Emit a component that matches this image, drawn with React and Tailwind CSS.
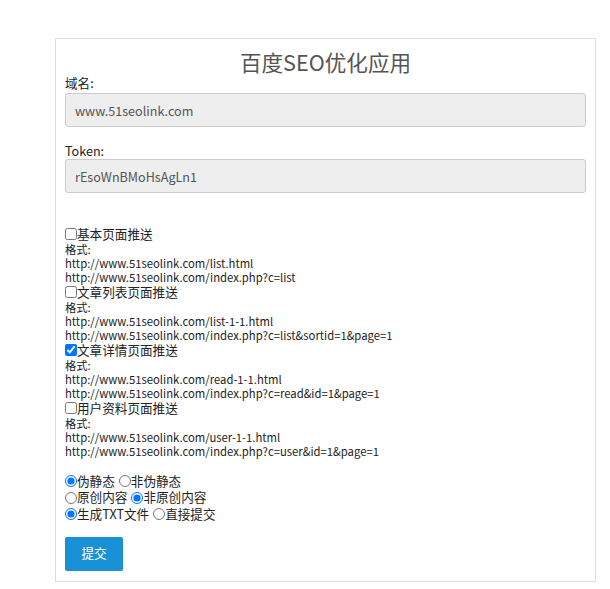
import React from 'react';

const font = { fontFamily: '"Noto Sans CJK SC", "Noto Sans", sans-serif' };

const sections = [
  { label: '基本页面推送', checked: false, urls: ['http://www.51seolink.com/list.html', 'http://www.51seolink.com/index.php?c=list'] },
  { label: '文章列表页面推送', checked: false, urls: ['http://www.51seolink.com/list-1-1.html', 'http://www.51seolink.com/index.php?c=list&sortid=1&page=1'] },
  { label: '文章详情页面推送', checked: true, urls: ['http://www.51seolink.com/read-1-1.html', 'http://www.51seolink.com/index.php?c=read&id=1&page=1'] },
  { label: '用户资料页面推送', checked: false, urls: ['http://www.51seolink.com/user-1-1.html', 'http://www.51seolink.com/index.php?c=user&id=1&page=1'] },
];

const radios = [
  { name: 'rewrite', a: '伪静态', b: '非伪静态', first: true },
  { name: 'original', a: '原创内容', b: '非原创内容', first: false },
  { name: 'mode', a: '生成TXT文件', b: '直接提交', first: true },
];

export default function App() {
  return (
    <div className="bg-white w-[610px] h-[589px] pt-[38px] pl-[55px]" style={font}>
      <div className="w-[541px] h-[544px] border border-[#ddd] px-[9px] pt-[9px] text-[#222]">
        <h1 className="text-center text-[21.6px] leading-[27px] text-[#555]">百度SEO优化应用</h1>

        <div className="text-[12.6px] leading-[16px] h-[16px]">域名:</div>
        <input
          readOnly
          value="www.51seolink.com"
          className="block w-full h-[34px] mt-[2px] px-[9px] bg-[#eee] border border-[#ccc] rounded-[3px] text-[12.6px] text-[#555] outline-none"
        />

        <div className="text-[12.6px] leading-[16px] h-[16px] mt-[16px]">Token:</div>
        <input
          readOnly
          value="rEsoWnBMoHsAgLn1"
          className="block w-full h-[34px] px-[9px] bg-[#eee] border border-[#ccc] rounded-[3px] text-[12.6px] text-[#555] outline-none"
        />

        <div className="mt-[33px]">
          {sections.map((s) => (
            <div key={s.label}>
              <label className="flex items-center text-[12.6px] leading-[16px] h-[16px]">
                <input type="checkbox" defaultChecked={s.checked} className="w-[12px] h-[12px] m-0" />
                <span>{s.label}</span>
              </label>
              <div className="text-[11.3px] leading-[14px] h-[14px]">格式:</div>
              {s.urls.map((u) => (
                <div key={u} className="text-[11.3px] leading-[14px] h-[14px]">{u}</div>
              ))}
            </div>
          ))}
        </div>

        <div className="mt-[15px] text-[12.6px]">
          {radios.map((r) => (
            <div key={r.name} className="flex items-center h-[16.5px]">
              <label className="flex items-center">
                <input type="radio" name={r.name} defaultChecked={r.first} className="w-[12px] h-[12px] m-0" />
                <span>{r.a}</span>
              </label>
              <label className="flex items-center ml-[4px]">
                <input type="radio" name={r.name} defaultChecked={!r.first} className="w-[12px] h-[12px] m-0" />
                <span>{r.b}</span>
              </label>
            </div>
          ))}
        </div>

        <button className="block mt-[14px] w-[58px] h-[34px] bg-[#1a91d6] text-white text-[12.6px] rounded-[2px]">提交</button>
      </div>
    </div>
  );
}
